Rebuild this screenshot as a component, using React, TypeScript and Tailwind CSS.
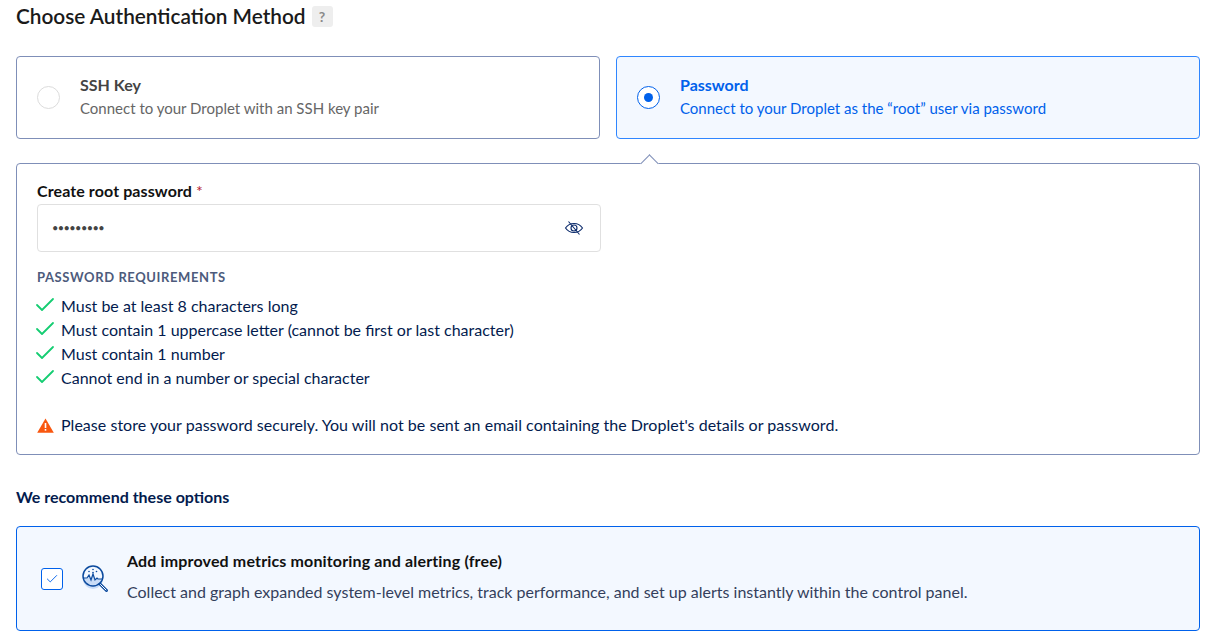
import { Check } from 'lucide-react';

const font = "[font-family:Lato,'Noto_Sans',sans-serif]";

const requirements = [
  'Must be at least 8 characters long',
  'Must contain 1 uppercase letter (cannot be first or last character)',
  'Must contain 1 number',
  'Cannot end in a number or special character',
];

function EyeOff() {
  return (
    <svg width="20" height="20" viewBox="0 0 20 20" fill="none" stroke="#0b2a6b" strokeWidth="1.1">
      <path d="M1.500 10c2-3 5-4.500 8.500-4.500s6.500 1.500 8.500 4.500c-2 3-5 4.500-8.500 4.500S3.500 13 1.500 10z" />
      <circle cx="10" cy="10" r="3" />
      <path d="M4.500 3.500l11 13" />
    </svg>
  );
}

function MetricsIcon() {
  return (
    <svg width="30" height="30" viewBox="0 0 30 30" fill="none">
      <path d="M3 14l4 1 2-3 2 4 2-6 2 6 2-2 1 1h5a10 10 0 0 1-20 0z" fill="#c9dcf7" />
      <circle cx="13" cy="12" r="10" stroke="#0b4a9e" strokeWidth="1.500" />
      <path d="M3.500 14H7l2-3 2 5 2-6 2 6 2-2 1 1h4.500" stroke="#0b4a9e" strokeWidth="1.200" />
      <path d="M20 20l6.500 6.500" stroke="#0b4a9e" strokeWidth="3" strokeLinecap="round" />
      <path d="M20.500 20.500l5.500 5.500" stroke="#fff" strokeWidth="1" strokeLinecap="round" />
      <circle cx="9" cy="7.500" r="0.800" fill="#0b4a9e" />
      <circle cx="13" cy="5.500" r="0.800" fill="#0b4a9e" />
      <circle cx="13" cy="8.500" r="0.800" fill="#0b4a9e" />
      <circle cx="16.500" cy="7.500" r="0.800" fill="#0b4a9e" />
    </svg>
  );
}

export default function App() {
  return (
    <div className={`${font} h-[644px] w-[1216px] overflow-hidden bg-white px-4 text-[16px] text-[#031b4e]`}>
      <div className="flex h-[33px] items-center gap-[6px] pb-[1px]">
        <h2 className="text-[20.800px] leading-none font-semibold text-[#1a1a1a]">Choose Authentication Method</h2>
        <span className="flex h-[21px] w-[21px] items-center justify-center rounded-[3px] bg-[#eeeeee] text-[14px] font-bold text-[#8a8a8a]">?</span>
      </div>

      <div className="mt-[23px] grid grid-cols-2 gap-4">
        <div className="flex h-[83px] items-center rounded-[4px] border border-[#7f8fb8] pb-[2px] pl-5">
          <span className="mt-[2px] h-[23px] w-[23px] rounded-full border border-[#dcdcdc] bg-white" />
          <div className="ml-[20px]">
            <p className="text-[16px] leading-5 font-bold text-[#444444]">SSH Key</p>
            <p className="mt-[3px] text-[15px] leading-5 text-[#666666]">Connect to your Droplet with an SSH key pair</p>
          </div>
        </div>
        <div className="flex h-[83px] items-center rounded-[4px] border border-[#2f86ff] bg-[#f3f8ff] pb-[2px] pl-5">
          <span className="mt-[2px] flex h-[23px] w-[23px] items-center justify-center rounded-full border border-[#0061eb] bg-white">
            <span className="h-[9px] w-[9px] rounded-full bg-[#0061eb]" />
          </span>
          <div className="ml-[20px]">
            <p className="text-[16px] leading-5 font-bold text-[#0061eb]">Password</p>
            <p className="mt-[3px] text-[15px] leading-5 text-[#0061eb]">Connect to your Droplet as the “root” user via password</p>
          </div>
        </div>
      </div>

      <div className="relative mt-6 h-[292px] rounded-[4px] border border-[#7f8fb8] px-5 pt-[18px]">
        <span className="absolute top-[-7px] left-[626px] h-[13px] w-[13px] rotate-45 border-t border-l border-[#7f8fb8] bg-white" />
        <label className="block leading-[18px] font-bold tracking-[0.1px] text-[#111111]">
          Create root password <span className="font-normal text-[#b5232f]">*</span>
        </label>
        <div className="mt-1 flex h-12 w-[564px] items-center justify-between rounded-[4px] border border-[#e0e0e0] pr-4 pl-[14px]">
          <span className="text-[11px] tracking-[-0.6px] text-[#444444]">•••••••••</span>
          <EyeOff />
        </div>
        <p className="mt-[17px] text-[13px] leading-4 font-bold tracking-[0.6px] text-[#4d5b7c]">PASSWORD REQUIREMENTS</p>
        <ul className="mt-[9px]">
          {requirements.map((r) => (
            <li key={r} className="flex h-6 items-center text-[#031b4e]">
              <Check size={24} strokeWidth={1.8} className="-mt-[3px] -ml-1 text-[#15cd72]" />
              <span className="ml-[4px]">{r}</span>
            </li>
          ))}
        </ul>
        <div className="mt-[23px] flex items-center gap-[7px]">
          <svg width="17" height="15" viewBox="0 0 17 15">
            <path d="M8.500 0.500L16.800 14.800H0.200z" fill="#f9570f" />
            <rect x="7.700" y="5" width="1.600" height="5" fill="#fff" />
            <rect x="7.700" y="11" width="1.600" height="1.700" fill="#fff" />
          </svg>
          <span className="tracking-[0.03px]">Please store your password securely. You will not be sent an email containing the Droplet's details or password.</span>
        </div>
      </div>

      <p className="mt-[32px] leading-5 font-bold text-[#031b4e]">We recommend these options</p>

      <div className="mt-[19px] flex h-[105px] items-center rounded-[4px] border border-[#0061eb] bg-[#f3f8ff] pb-[4px] pl-6">
        <span className="mt-[4px] flex h-[22px] w-[22px] items-center justify-center rounded-[3px] border border-[#0061eb] bg-white">
          <Check size={14} strokeWidth={1.6} className="text-[#0061eb]" />
        </span>
        <span className="mt-[4px] ml-[17px] flex"><MetricsIcon /></span>
        <div className="ml-[17px]">
          <p className="leading-5 font-bold tracking-[0.15px] text-[#111111]">Add improved metrics monitoring and alerting (free)</p>
          <p className="mt-[11px] leading-5 text-[#333f5c]">Collect and graph expanded system-level metrics, track performance, and set up alerts instantly within the control panel.</p>
        </div>
      </div>
    </div>
  );
}
